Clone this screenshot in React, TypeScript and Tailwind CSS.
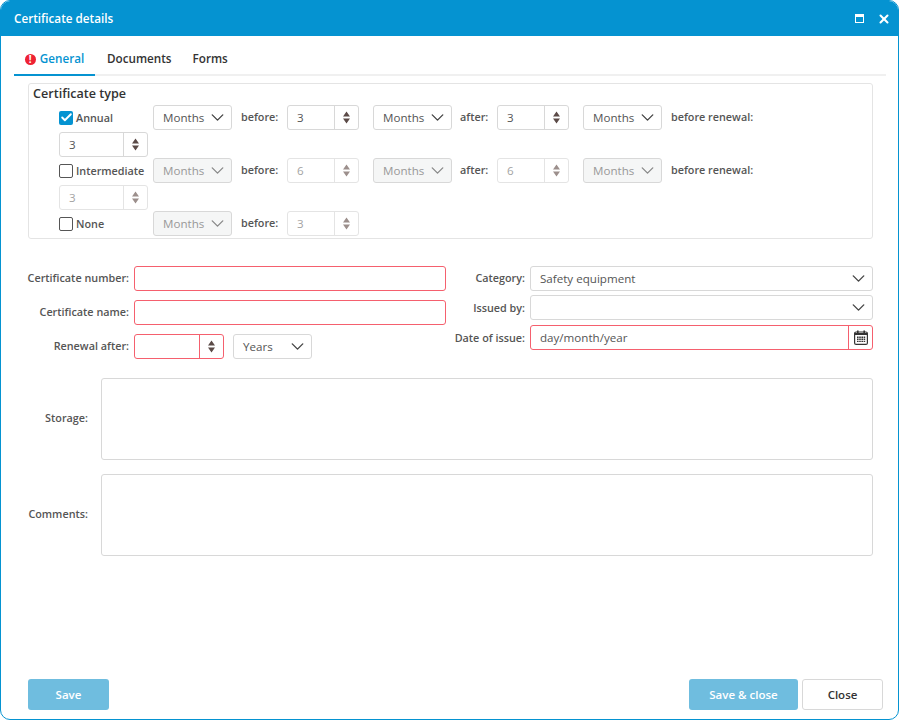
import { type ReactNode } from 'react';
import { Check, ChevronDown, X } from 'lucide-react';

function Arrows({ disabled }: { disabled?: boolean }) {
  return (
    <svg width="7" height="13" viewBox="0 0 7 13" className={disabled ? 'text-[#9c8f8c]' : 'text-[#5b4a47]'}>
      <path d="M3.5 0.5 L7 5.5 H0 Z M0 7.5 H7 L3.5 12.5 Z" fill="currentColor" />
    </svg>
  );
}

function Spinner({ value, disabled, width = 'w-[72px]', invalid }: { value?: string; disabled?: boolean; width?: string; invalid?: boolean }) {
  const border = invalid ? 'border-[#f5606e]' : disabled ? 'border-[#e4e4e4]' : 'border-[#d8d8d8]';
  return (
    <div className={`flex h-[25px] shrink-0 rounded-[3px] border bg-white text-[11.6px] ${width} ${border} ${disabled ? 'text-[#a3a3a3]' : 'text-[#555]'}`}>
      <span className="flex flex-1 items-center pl-[9px]">{value}</span>
      <span className={`flex w-6 items-center justify-center border-l ${border}`}>
        <Arrows disabled={disabled} />
      </span>
    </div>
  );
}

function Dropdown({ value, disabled, width = 'w-[79px]' }: { value?: string; disabled?: boolean; width?: string }) {
  return (
    <div className={`flex h-[25px] shrink-0 items-center justify-between rounded-[3px] border border-[#d8d8d8] pl-[9px] pr-[3px] text-[11.6px] ${width} ${disabled ? 'bg-[#f5f6f6] text-[#999]' : 'bg-white text-[#555]'}`}>
      <span>{value}</span>
      <ChevronDown size={21} strokeWidth={1.6} className={disabled ? 'text-[#8a8a8a]' : 'text-[#444]'} />
    </div>
  );
}

function Small({ children, className = '' }: { children: ReactNode; className?: string }) {
  return <span className={`text-[10.8px] font-semibold text-[#555] ${className}`}>{children}</span>;
}

function CheckLabel({ label, checked }: { label: string; checked?: boolean }) {
  return (
    <div className="flex w-[94px] shrink-0 items-center gap-[3px]">
      {checked ? (
        <span className="flex h-[14px] w-[14px] items-center justify-center rounded-[2px] bg-[#0593d1] text-white">
          <Check size={13} strokeWidth={3.5} />
        </span>
      ) : (
        <span className="h-[14px] w-[14px] rounded-[2px] border border-[#555] bg-white" />
      )}
      <Small className="whitespace-nowrap pt-[2px]">{label}</Small>
    </div>
  );
}

function TypeRow({ label, checked, disabled, before, after }: { label: string; checked?: boolean; disabled?: boolean; before: string; after: string }) {
  return (
    <div className="flex flex-col gap-[2px]">
      <div className="flex items-center">
        <CheckLabel label={label} checked={checked} />
        <Dropdown value="Months" disabled={disabled} />
        <Small className="ml-[9px] w-[46px]">before:</Small>
        <Spinner value={before} disabled={disabled} />
        <div className="ml-[14px]">
          <Dropdown value="Months" disabled={disabled} />
        </div>
        <Small className="ml-[8px] w-[37px]">after:</Small>
        <Spinner value={after} disabled={disabled} />
        <div className="ml-[14px]">
          <Dropdown value="Months" disabled={disabled} />
        </div>
        <Small className="ml-[9px]">before renewal:</Small>
      </div>
      <Spinner value="3" disabled={disabled} width="w-[89px]" />
    </div>
  );
}

function FormRow({ label, labelWidth, labelClass = '', children }: { label: string; labelWidth: string; labelClass?: string; children: ReactNode }) {
  return (
    <div className="flex items-center">
      <div className={`flex shrink-0 justify-end pr-[5px] ${labelWidth}`}>
        <Small className={`whitespace-nowrap ${labelClass}`}>{label}</Small>
      </div>
      {children}
    </div>
  );
}

function TextBox({ label }: { label: string }) {
  return (
    <div className="flex items-center">
      <div className="flex w-[73px] shrink-0 justify-end pb-[2px] pr-[13px]">
        <Small>{label}</Small>
      </div>
      <div className="h-[82px] flex-1 rounded-[3px] border border-[#d8d8d8] bg-white" />
    </div>
  );
}

function CalendarIcon() {
  return (
    <svg width="14" height="15" viewBox="0 0 14 15" className="text-[#333]">
      <rect x="0.6" y="2" width="12.8" height="12.4" rx="1.5" fill="none" stroke="currentColor" strokeWidth="1.2" />
      <rect x="3" y="0.5" width="1.6" height="3" fill="currentColor" />
      <rect x="9.4" y="0.5" width="1.6" height="3" fill="currentColor" />
      <rect x="1" y="3" width="12" height="2" fill="currentColor" />
      <path d="M3 6.5h1.6v1.4H3zM5.2 6.5h1.6v1.4H5.2zM7.4 6.5H9v1.4H7.4zM9.6 6.5h1.6v1.4H9.6zM3 8.6h1.6V10H3zM5.2 8.6h1.6V10H5.2zM7.4 8.6H9V10H7.4zM9.6 8.6h1.6V10H9.6zM3 10.7h1.6v1.4H3zM5.2 10.7h1.6v1.4H5.2zM7.4 10.7H9v1.4H7.4zM9.6 10.7h1.6v1.4H9.6z" fill="currentColor" />
    </svg>
  );
}

export default function App() {
  return (
    <div className="flex h-[720px] w-[899px] flex-col overflow-hidden rounded-[10px] border border-[#0593d1] bg-white font-['Open_Sans',sans-serif]">
      <header className="flex h-[35px] shrink-0 items-center justify-between bg-[#0593d1] pl-[13px] pr-[7px] text-white">
        <h1 className="text-[11.7px] font-semibold">Certificate details</h1>
        <div className="flex items-center gap-[13px]">
          <span className="h-[9px] w-[9px] border border-t-[3px] border-white" />
          <X size={14} strokeWidth={3.5} />
        </div>
      </header>

      <nav className="ml-[13px] mr-[12px] mt-[8px] flex h-[32px] shrink-0 border-b-2 border-[#f0f0f0] text-[11.7px] font-semibold text-[#333]">
        <div className="-mb-[2px] flex w-[81px] items-center justify-center gap-[4px] border-b-2 border-[#0593d1] text-[#0593d1]">
          <span className="flex h-[11px] w-[11px] items-center justify-center rounded-full bg-[#ee2233] text-[10px] font-bold leading-none text-white">!</span>
          General
        </div>
        <div className="flex items-center pl-[12px]">Documents</div>
        <div className="flex items-center pl-[21px]">Forms</div>
      </nav>

      <div className="flex flex-1 flex-col pl-[27px] pr-[25px]">
        <section className="mt-[7px] h-[156px] rounded-[3px] border border-[#e4e4e4] pl-[30px]">
          <h2 className="-ml-[26px] text-[12.6px] font-semibold leading-[19px] text-[#333]">Certificate type</h2>
          <div className="mt-[2px] flex flex-col gap-px">
            <TypeRow label="Annual" checked before="3" after="3" />
            <TypeRow label="Intermediate" disabled before="6" after="6" />
            <div className="flex items-center">
              <CheckLabel label="None" />
              <Dropdown value="Months" disabled />
              <Small className="ml-[9px] w-[46px]">before:</Small>
              <Spinner value="3" disabled />
            </div>
          </div>
        </section>

        <div className="mt-[27px] flex h-[93px]">
          <div className="flex w-[418px] flex-col gap-[9px]">
            <FormRow label="Certificate number:" labelWidth="w-[106px]">
              <div className="h-[25px] w-[312px] rounded-[3px] border border-[#f5606e] bg-white" />
            </FormRow>
            <FormRow label="Certificate name:" labelWidth="w-[106px]">
              <div className="h-[25px] w-[312px] rounded-[3px] border border-[#f5606e] bg-white" />
            </FormRow>
            <FormRow label="Renewal after:" labelWidth="w-[106px]">
              <Spinner invalid width="w-[90px]" />
              <div className="ml-[9px]">
                <Dropdown value="Years" />
              </div>
            </FormRow>
          </div>
          <div className="flex flex-1 flex-col gap-[4px]">
            <FormRow label="Category:" labelWidth="w-[84px]">
              <Dropdown value="Safety equipment" width="w-[343px]" />
            </FormRow>
            <FormRow label="Issued by:" labelWidth="w-[84px]" labelClass="pt-[2px]">
              <Dropdown width="w-[343px]" />
            </FormRow>
            <div className="mt-px">
              <FormRow label="Date of issue:" labelWidth="w-[84px]" labelClass="pt-[2px]">
                <div className="flex h-[25px] w-[343px] rounded-[3px] border border-[#f5606e] bg-white text-[11.6px] text-[#555]">
                  <span className="flex flex-1 items-center pl-[9px]">day/month/year</span>
                  <span className="flex w-6 items-center justify-center border-l border-[#f5606e]">
                    <CalendarIcon />
                  </span>
                </div>
              </FormRow>
            </div>
          </div>
        </div>

        <div className="mt-[19px] flex flex-col gap-[14px]">
          <TextBox label="Storage:" />
          <TextBox label="Comments:" />
        </div>

        <footer className="-mr-[10px] mt-auto mb-[9px] flex items-center text-[11.5px] font-semibold">
          <button className="h-[31px] w-[81px] rounded-[3px] bg-[#6fbddf] text-white">Save</button>
          <button className="ml-auto h-[31px] w-[109px] rounded-[3px] bg-[#6fbddf] text-white">Save &amp; close</button>
          <button className="ml-[4px] h-[31px] w-[81px] rounded-[3px] border border-[#d8d8d8] bg-white text-[#333]">Close</button>
        </footer>
      </div>
    </div>
  );
}
